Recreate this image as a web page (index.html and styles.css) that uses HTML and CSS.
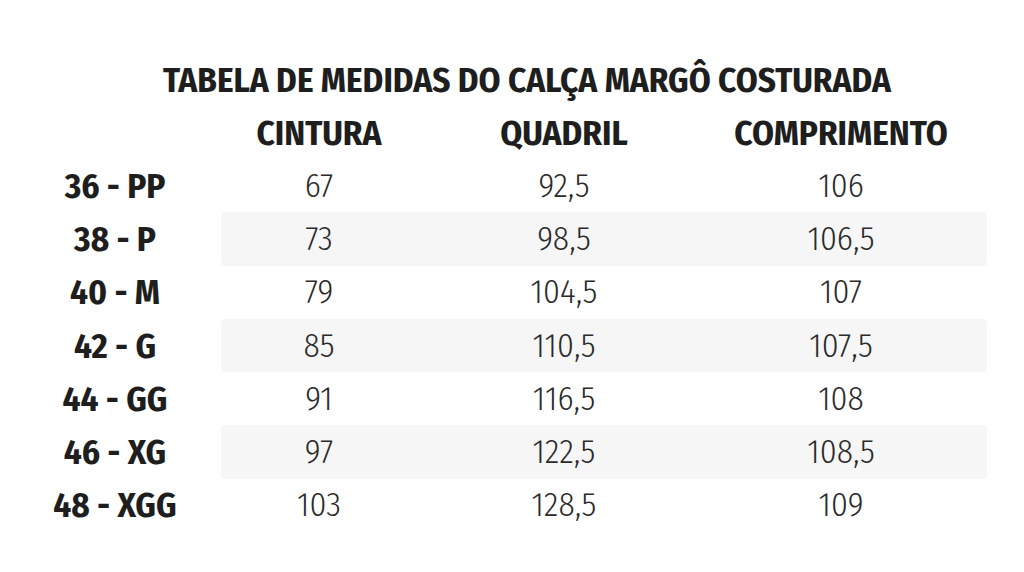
FILE: index.html
```html
<!DOCTYPE html>
<html lang="pt-BR">
<head>
<meta charset="utf-8">
<link rel="stylesheet" href="styles.css">
</head>
<body>
<div class="page">
  <h1 class="title">TABELA DE MEDIDAS DO CALÇA MARGÔ COSTURADA</h1>
  <div class="row head">
    <div class="label"></div>
    <div class="vals">
      <div>CINTURA</div><div>QUADRIL</div><div>COMPRIMENTO</div>
    </div>
  </div>
  <div class="row">
    <div class="label">36 - PP</div>
    <div class="vals"><div>67</div><div>92,5</div><div>106</div></div>
  </div>
  <div class="row alt">
    <div class="label">38 - P</div>
    <div class="vals"><div>73</div><div>98,5</div><div>106,5</div></div>
  </div>
  <div class="row">
    <div class="label">40 - M</div>
    <div class="vals"><div>79</div><div>104,5</div><div>107</div></div>
  </div>
  <div class="row alt">
    <div class="label">42 - G</div>
    <div class="vals"><div>85</div><div>110,5</div><div>107,5</div></div>
  </div>
  <div class="row">
    <div class="label">44 - GG</div>
    <div class="vals"><div>91</div><div>116,5</div><div>108</div></div>
  </div>
  <div class="row alt">
    <div class="label">46 - XG</div>
    <div class="vals"><div>97</div><div>122,5</div><div>108,5</div></div>
  </div>
  <div class="row">
    <div class="label">48 - XGG</div>
    <div class="vals"><div>103</div><div>128,5</div><div>109</div></div>
  </div>
</div>
</body>
</html>
```
FILE: styles.css
```css
html, body {
  margin: 0;
  padding: 0;
  background: #ffffff;
}
body {
  font-family: "Fira Sans Condensed", "Open Sans", sans-serif;
  font-stretch: 75%;
  color: #222222;
}
.page {
  width: 1024px;
  height: 572px;
  padding: 53px 0 0 9px;
  box-sizing: border-box;
}
.title {
  margin: 0;
  height: 53px;
  display: flex;
  align-items: center;
  justify-content: center;
  width: 1036px;
  font-size: 35px;
  font-weight: 700;
  color: #1e1e1e;
  letter-spacing: 0;
}
.row {
  display: flex;
  height: 53.3px;
}
.row.head {
  height: 53px;
}
.label {
  width: 212px;
  display: flex;
  align-items: center;
  justify-content: center;
  font-size: 35px;
  font-weight: 700;
  color: #1e1e1e;
}
.vals {
  display: grid;
  grid-template-columns: 196px 294px 260px;
  padding-right: 16px;
  border-radius: 4px;
}
.vals > div {
  display: flex;
  align-items: center;
  justify-content: center;
  font-size: 33.5px;
  font-weight: 300;
  color: #2a2a2a;
}
.head .vals > div {
  font-size: 35px;
  font-weight: 700;
  color: #1e1e1e;
}
.alt .vals {
  background: #f6f6f6;
}
```
